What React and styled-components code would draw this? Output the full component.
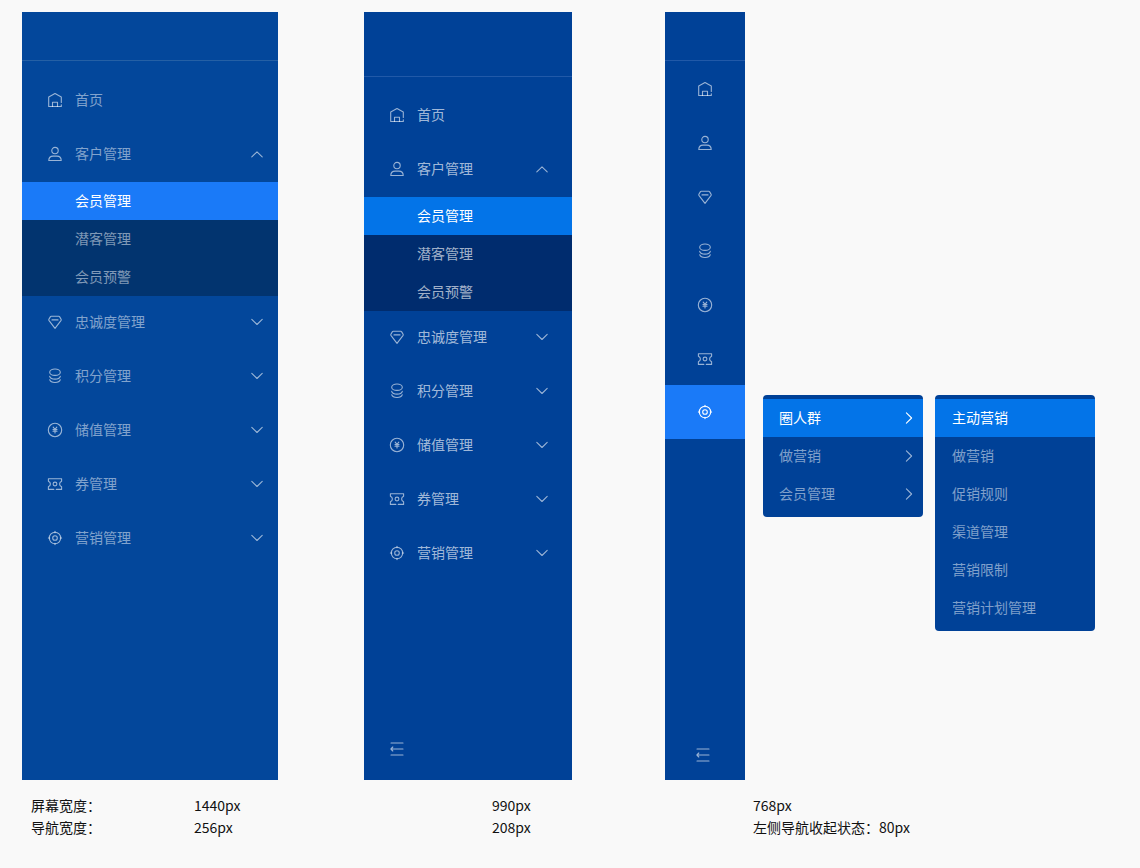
import React from "react";
import styled, { createGlobalStyle, ThemeProvider } from "styled-components";

const GlobalStyle = createGlobalStyle`
  *, *::before, *::after { box-sizing: border-box; }
  body {
    margin: 0;
    background: #f9f9f9;
    color: #111;
    font: 14px/22px "Noto Sans CJK SC", "Noto Sans", sans-serif;
  }
  button { font: inherit; border: 0; cursor: pointer; }
  a { text-decoration: none; }
  ul { list-style: none; margin: 0; padding: 0; }
`;

const wideTheme = {
  base: "#03479b",
  line: "#2560a5",
  sub: "#02346f",
  active: "#1a7af8",
  text: "rgba(255, 255, 255, 0.5)",
  icon: "rgba(255, 255, 255, 0.6)",
};

const mediumTheme = {
  base: "#004197",
  line: "#2159a8",
  sub: "#002c6e",
  active: "#0374e8",
  text: "rgba(255, 255, 255, 0.65)",
  icon: "rgba(255, 255, 255, 0.6)",
};

const railTheme = { ...mediumTheme, active: "#1a7af8" };

const flyoutTheme = { ...mediumTheme, text: "rgba(255, 255, 255, 0.5)" };

const Page = styled.main`
  padding: 12px 0 28px 22px;
`;

const Boards = styled.div`
  display: grid;
  grid-template-columns: 342fr 301fr 475fr;
  align-items: stretch;
`;

const Sidebar = styled.nav`
  display: flex;
  flex-direction: column;
  width: ${(p) => p.$width}px;
  min-height: 768px;
  background: ${(p) => p.theme.base};
`;

const Brand = styled.div`
  height: ${(p) => p.$height}px;
  border-bottom: 1px solid ${(p) => p.theme.line};
`;

const Menu = styled.ul`
  padding-top: ${(p) => p.$top}px;
`;

const Label = styled.span`
  flex: 1;
  padding-bottom: 2px;
  color: ${(p) => (p.$active ? "#fff" : p.theme.text)};
`;

const MenuRow = styled.button`
  display: flex;
  align-items: center;
  gap: 12px;
  width: 100%;
  height: 54px;
  padding: 0 ${(p) => p.$end}px 2px 25px;
  background: none;
  color: ${(p) => p.theme.icon};
  text-align: left;
`;

const SubMenu = styled.ul`
  background: ${(p) => p.theme.sub};
`;

const SubLink = styled.a`
  display: flex;
  align-items: center;
  height: 38px;
  padding-left: 53px;
  background: ${(p) => (p.$active ? p.theme.active : "transparent")};
`;

const RailItem = styled.li`
  position: relative;
`;

const RailButton = styled.button`
  display: flex;
  align-items: center;
  justify-content: center;
  width: 100%;
  height: 54px;
  padding: ${(p) => (p.$active ? 0 : 2)}px 0 0;
  color: ${(p) => (p.$active ? "#fff" : p.theme.icon)};
  background: ${(p) => (p.$active ? p.theme.active : "none")};
`;

const CollapseButton = styled.button`
  display: flex;
  align-self: ${(p) => p.$align};
  margin-top: auto;
  padding: ${(p) => p.$pad};
  background: none;
  color: ${(p) => p.theme.icon};
`;

const Flyout = styled.ul`
  position: absolute;
  top: ${(p) => p.$top}px;
  left: ${(p) => p.$left}px;
  width: 160px;
  && { padding: 4px 0; }
  border-radius: 4px;
  background: ${(p) => p.theme.base};
`;

const FlyoutLink = styled.a`
  display: flex;
  align-items: center;
  height: 38px;
  padding: 0 6px 0 ${(p) => p.$start}px;
  color: ${(p) => (p.$active ? "#fff" : p.theme.icon)};
  background: ${(p) => (p.$active ? p.theme.active : "transparent")};
`;

const Specs = styled.table`
  display: block;
  margin-top: 14px;
  padding-left: 9px;

  tbody { display: block; }
`;

const SpecRow = styled.tr`
  display: grid;
  grid-template-columns: 163fr 298fr 261fr 387fr;

  th, td { padding: 0; font-weight: 400; text-align: left; }
`;

const IconSvg = styled.svg`
  flex: none;
  display: block;
  fill: none;
  stroke: currentColor;
  stroke-width: 1.1;
  stroke-linecap: round;
  stroke-linejoin: round;
`;

const shapes = {
  home: (
    <>
      <path d="M14.3 10.4V4.900L8 1.500 1.700 4.900v9.600h12.600v-1.700" />
      <path d="M5.500 14.500v-4.200h5v4.200" />
    </>
  ),
  user: (
    <>
      <circle cx="8" cy="4.600" r="3.200" />
      <path d="M1.800 14.500c0-2.600 1.700-4.400 4.300-4.400h3.800c2.600 0 4.300 1.800 4.300 4.400z" />
    </>
  ),
  diamond: (
    <>
      <path d="M4.300 2.300h7.400c.5 0 .8.2 1 .6l1.400 2.300c.2.400.2.700 0 1.100L8 14.300 1.900 6.300c-.2-.4-.2-.7 0-1.100l1.400-2.300c.2-.4.500-.6 1-.6z" />
      <path d="M5 5.900h6" />
    </>
  ),
  coins: (
    <>
      <ellipse cx="8" cy="4.200" rx="5.300" ry="3.200" />
      <path d="M2.700 8.300c.5 1.700 2.600 2.800 5.300 2.800s4.800-1.100 5.300-2.800" />
      <path d="M2.700 11.700c.5 1.700 2.600 2.800 5.300 2.800s4.800-1.100 5.300-2.800" />
    </>
  ),
  yuan: (
    <>
      <circle cx="8" cy="8" r="6.700" />
      <path d="M6.200 5.200 8 7.400l1.800-2.200M8 7.400v3.600M6 7.600h4M6 9.300h4" />
    </>
  ),
  ticket: (
    <>
      <path d="M6.800 13.400H1.400v-2.600c1.400-.6 2-1.500 2-2.800s-.6-2.200-2-2.800V2.700h13.200v2.500c-1.400.6-2 1.500-2 2.800s.6 2.200 2 2.800v2.600H9.300" />
      <circle cx="8" cy="8" r="1.900" />
    </>
  ),
  target: (
    <>
      <circle cx="8" cy="8" r="5.700" />
      <circle cx="8" cy="8" r="2.300" />
      <path d="M8 1.400v1.400M8 13.200v1.400M1.400 8h1.400M13.200 8h1.400" />
    </>
  ),
  collapse: <path d="M2 2h12M2 14h12M2.200 8H14M3.800 6 1.900 8l1.900 2" />,
  up: <path d="M2.800 10.900 8 5.900l5.200 5" />,
  down: <path d="M2.800 5.400 8 10.500l5.200-5.100" />,
  right: <path d="M5.400 2.900 10.600 8l-5.200 5.100" />,
};

const Icon = ({ name }) => (
  <IconSvg width="16" height="16" viewBox="0 0 16 16" aria-hidden="true">
    {shapes[name]}
  </IconSvg>
);

const menu = [
  { icon: "home", label: "首页" },
  { icon: "user", label: "客户管理", children: ["会员管理", "潜客管理", "会员预警"] },
  { icon: "diamond", label: "忠诚度管理" },
  { icon: "coins", label: "积分管理" },
  { icon: "yuan", label: "储值管理" },
  { icon: "ticket", label: "券管理" },
  { icon: "target", label: "营销管理" },
];

const audienceMenu = ["圈人群", "做营销", "会员管理"];
const marketingMenu = ["主动营销", "做营销", "促销规则", "渠道管理", "营销限制", "营销计划管理"];

const specs = [
  ["屏幕宽度：", "1440px", "990px", "768px"],
  ["导航宽度：", "256px", "208px", "左侧导航收起状态：80px"],
];

function FullMenu({ top, end }) {
  return (
    <Menu $top={top}>
      {menu.map(({ icon, label, children }) => (
        <li key={label}>
          <MenuRow
            as={icon === "home" ? "a" : "button"}
            href={icon === "home" ? "#home" : undefined}
            aria-expanded={icon === "home" ? undefined : Boolean(children)}
            $end={end}
          >
            <Icon name={icon} />
            <Label>{label}</Label>
            {icon !== "home" && <Icon name={children ? "up" : "down"} />}
          </MenuRow>
          {children && (
            <SubMenu>
              {children.map((item, i) => (
                <li key={item}>
                  <SubLink href="#members" $active={i === 0}>
                    <Label $active={i === 0}>{item}</Label>
                  </SubLink>
                </li>
              ))}
            </SubMenu>
          )}
        </li>
      ))}
    </Menu>
  );
}

function Rail() {
  return (
    <Menu $top={0}>
      {menu.map(({ icon, label }) => {
        const active = icon === "target";
        return (
          <RailItem key={label}>
            <RailButton $active={active} aria-label={label}>
              <Icon name={icon} />
            </RailButton>
            {active && <Flyouts />}
          </RailItem>
        );
      })}
    </Menu>
  );
}

function Flyouts() {
  return (
    <ThemeProvider theme={flyoutTheme}>
      <Flyout $top={10} $left={98}>
        {audienceMenu.map((item, i) => (
          <li key={item}>
            <FlyoutLink href="#audience" $active={i === 0} $start={16}>
              <Label $active={i === 0}>{item}</Label>
              <Icon name="right" />
            </FlyoutLink>
            {i === 0 && (
              <Flyout $top={0} $left={172}>
                {marketingMenu.map((entry, j) => (
                  <li key={entry}>
                    <FlyoutLink href="#marketing" $active={j === 0} $start={17}>
                      <Label $active={j === 0}>{entry}</Label>
                    </FlyoutLink>
                  </li>
                ))}
              </Flyout>
            )}
          </li>
        ))}
      </Flyout>
    </ThemeProvider>
  );
}

export default function App() {
  return (
    <Page>
      <GlobalStyle />
      <Boards>
        <ThemeProvider theme={wideTheme}>
          <Sidebar $width={256} aria-label="1440px">
            <Brand $height={49} />
            <FullMenu top={13} end={13} />
          </Sidebar>
        </ThemeProvider>
        <ThemeProvider theme={mediumTheme}>
          <Sidebar $width={208} aria-label="990px">
            <Brand $height={65} />
            <FullMenu top={12} end={22} />
            <CollapseButton $align="flex-start" $pad="8px 8px 23px 25px" aria-label="收起导航">
              <Icon name="collapse" />
            </CollapseButton>
          </Sidebar>
        </ThemeProvider>
        <ThemeProvider theme={railTheme}>
          <Sidebar $width={80} aria-label="768px">
            <Brand $height={49} />
            <Rail />
            <CollapseButton $align="center" $pad="8px 12px 17px 8px" aria-label="展开导航">
              <Icon name="collapse" />
            </CollapseButton>
          </Sidebar>
        </ThemeProvider>
      </Boards>
      <Specs>
        <tbody>
          {specs.map(([label, ...values]) => (
            <SpecRow key={label}>
              <th scope="row">{label}</th>
              {values.map((value) => <td key={value}>{value}</td>)}
            </SpecRow>
          ))}
        </tbody>
      </Specs>
    </Page>
  );
}
